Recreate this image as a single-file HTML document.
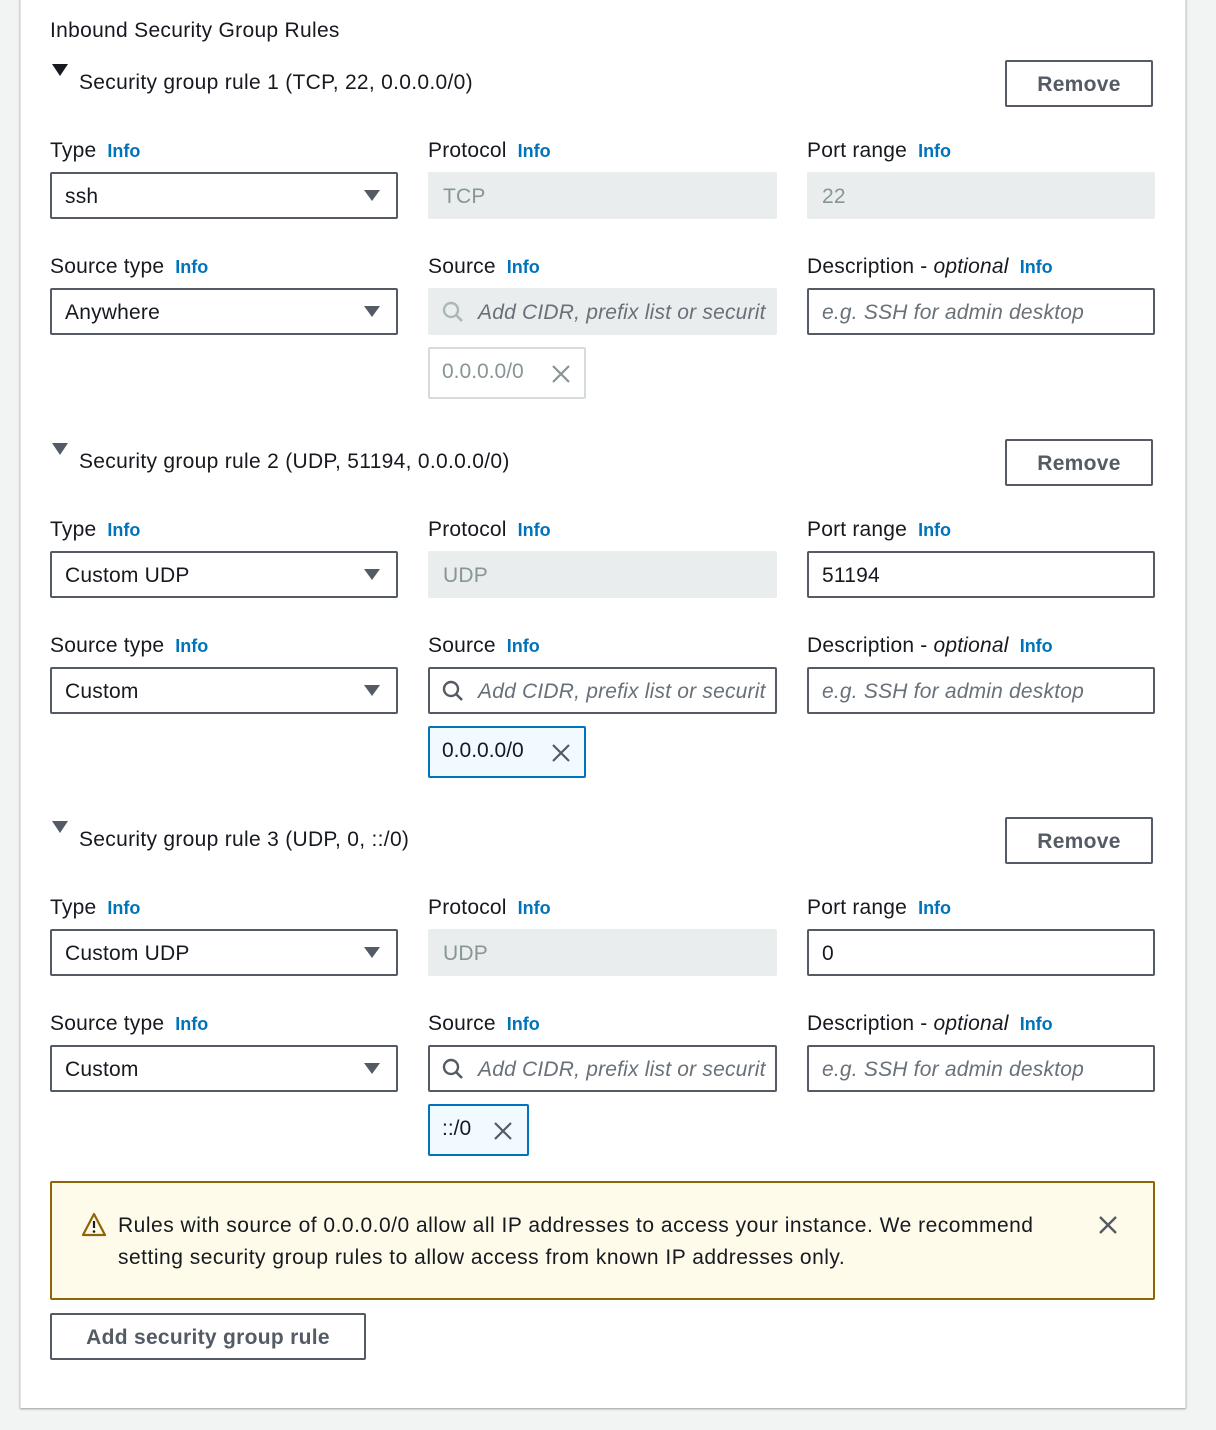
<!DOCTYPE html>
<html><head><meta charset="utf-8"><style>
*{box-sizing:border-box;margin:0;padding:0}
body{width:1216px;height:1430px;background:#f2f3f3;font-family:"Liberation Sans",sans-serif;color:#16191f;position:relative;overflow:hidden}
.panel{position:absolute;left:20px;top:-4px;width:1166px;height:1412px;background:#fff;border-left:1px solid #e0e2e3;border-right:1px solid #d5dbdb;box-shadow:0 1px 2px rgba(0,28,36,.4)}
.a{position:absolute}
.t{font-size:21px;white-space:nowrap;letter-spacing:0.3px;margin-top:2px}
.lbl{font-size:21px;white-space:nowrap;letter-spacing:0.2px;margin-top:1px}
.info{color:#0073bb;font-weight:bold;font-size:18px;margin-left:11px;letter-spacing:0}
.box{position:absolute;height:47px;border:2px solid #545b64;border-radius:2px;font-size:21px;letter-spacing:0.2px;line-height:45px;padding-left:13px;white-space:nowrap;overflow:hidden;background:#fff}
.dis{background:#eaeded;border-color:#eaeded;color:#879596}
.ph{color:#687078;font-style:italic}
.btn{position:absolute;border:2px solid #545b64;border-radius:2px;font-weight:bold;color:#545b64;font-size:21px;letter-spacing:0.3px;text-align:center;line-height:45px;height:47px;background:#fff}
.arrow{position:absolute;right:16px;top:16px;width:0;height:0;border-left:8px solid transparent;border-right:8px solid transparent;border-top:11px solid #545b64}
.tok{position:absolute;height:52px;border:2px solid #0073bb;background:#f1faff;border-radius:2px;font-size:21px;line-height:46px;padding-left:12px;white-space:nowrap}
.tokd{border-color:#d5dbdb;background:#fff;color:#879596}
.tri{position:absolute;width:0;height:0;border-left:8px solid transparent;border-right:8px solid transparent;border-top:12px solid #16191f}
</style></head><body>
<div class="panel"></div>
<div class="a t" style="left:50px;top:17px;font-size:21px">Inbound Security Group Rules</div>

<!-- rule 1 -->
<div class="tri" style="left:52px;top:64px"></div>
<div class="a t" style="left:79px;top:69px">Security group rule 1 (TCP, 22, 0.0.0.0/0)</div>
<div class="btn" style="left:1005px;top:60px;width:148px">Remove</div>
<div class="a lbl" style="left:50px;top:138px">Type<span class="info">Info</span></div>
<div class="a lbl" style="left:428px;top:138px">Protocol<span class="info">Info</span></div>
<div class="a lbl" style="left:807px;top:138px">Port range<span class="info">Info</span></div>
<div class="box" style="left:50px;top:172px;width:348px">ssh<div class="arrow"></div></div>
<div class="box dis" style="left:428px;top:172px;width:349px">TCP</div>
<div class="box dis" style="left:807px;top:172px;width:348px">22</div>
<div class="a lbl" style="left:50px;top:254px">Source type<span class="info">Info</span></div>
<div class="a lbl" style="left:428px;top:254px">Source<span class="info">Info</span></div>
<div class="a lbl" style="left:807px;top:254px">Description - <i>optional</i><span class="info">Info</span></div>
<div class="box" style="left:50px;top:288px;width:348px">Anywhere<div class="arrow"></div></div>
<div class="box dis" style="left:428px;top:288px;width:349px;padding-left:48px"><svg class="a" style="left:12px;top:11px" width="22" height="22" viewBox="0 0 22 22"><circle cx="9" cy="9" r="7" fill="none" stroke="#aab7b8" stroke-width="2.4"/><path d="M14 14l6 6" stroke="#aab7b8" stroke-width="2.6"/></svg><span class="ph" style="color:#687078">Add CIDR, prefix list or securit</span></div>
<div class="box" style="left:807px;top:288px;width:348px"><span class="ph">e.g. SSH for admin desktop</span></div>
<div class="tok tokd" style="left:428px;top:347px;width:158px">0.0.0.0/0<svg class="a" style="left:121px;top:15px" width="20" height="20"><path d="M2 2L18 18M18 2L2 18" stroke="#879596" stroke-width="2.2"/></svg></div>

<!-- rule 2 -->
<div class="tri" style="left:52px;top:443px;border-top-color:#545b64"></div>
<div class="a t" style="left:79px;top:448px">Security group rule 2 (UDP, 51194, 0.0.0.0/0)</div>
<div class="btn" style="left:1005px;top:439px;width:148px">Remove</div>
<div class="a lbl" style="left:50px;top:517px">Type<span class="info">Info</span></div>
<div class="a lbl" style="left:428px;top:517px">Protocol<span class="info">Info</span></div>
<div class="a lbl" style="left:807px;top:517px">Port range<span class="info">Info</span></div>
<div class="box" style="left:50px;top:551px;width:348px">Custom UDP<div class="arrow"></div></div>
<div class="box dis" style="left:428px;top:551px;width:349px">UDP</div>
<div class="box" style="left:807px;top:551px;width:348px">51194</div>
<div class="a lbl" style="left:50px;top:633px">Source type<span class="info">Info</span></div>
<div class="a lbl" style="left:428px;top:633px">Source<span class="info">Info</span></div>
<div class="a lbl" style="left:807px;top:633px">Description - <i>optional</i><span class="info">Info</span></div>
<div class="box" style="left:50px;top:667px;width:348px">Custom<div class="arrow"></div></div>
<div class="box" style="left:428px;top:667px;width:349px;padding-left:48px"><svg class="a" style="left:12px;top:11px" width="22" height="22" viewBox="0 0 22 22"><circle cx="9" cy="9" r="7" fill="none" stroke="#545b64" stroke-width="2.4"/><path d="M14 14l6 6" stroke="#545b64" stroke-width="2.6"/></svg><span class="ph">Add CIDR, prefix list or securit</span></div>
<div class="box" style="left:807px;top:667px;width:348px"><span class="ph">e.g. SSH for admin desktop</span></div>
<div class="tok" style="left:428px;top:726px;width:158px">0.0.0.0/0<svg class="a" style="left:121px;top:15px" width="20" height="20"><path d="M2 2L18 18M18 2L2 18" stroke="#545b64" stroke-width="2.2"/></svg></div>

<!-- rule 3 -->
<div class="tri" style="left:52px;top:821px;border-top-color:#545b64"></div>
<div class="a t" style="left:79px;top:826px">Security group rule 3 (UDP, 0, ::/0)</div>
<div class="btn" style="left:1005px;top:817px;width:148px">Remove</div>
<div class="a lbl" style="left:50px;top:895px">Type<span class="info">Info</span></div>
<div class="a lbl" style="left:428px;top:895px">Protocol<span class="info">Info</span></div>
<div class="a lbl" style="left:807px;top:895px">Port range<span class="info">Info</span></div>
<div class="box" style="left:50px;top:929px;width:348px">Custom UDP<div class="arrow"></div></div>
<div class="box dis" style="left:428px;top:929px;width:349px">UDP</div>
<div class="box" style="left:807px;top:929px;width:348px">0</div>
<div class="a lbl" style="left:50px;top:1011px">Source type<span class="info">Info</span></div>
<div class="a lbl" style="left:428px;top:1011px">Source<span class="info">Info</span></div>
<div class="a lbl" style="left:807px;top:1011px">Description - <i>optional</i><span class="info">Info</span></div>
<div class="box" style="left:50px;top:1045px;width:348px">Custom<div class="arrow"></div></div>
<div class="box" style="left:428px;top:1045px;width:349px;padding-left:48px"><svg class="a" style="left:12px;top:11px" width="22" height="22" viewBox="0 0 22 22"><circle cx="9" cy="9" r="7" fill="none" stroke="#545b64" stroke-width="2.4"/><path d="M14 14l6 6" stroke="#545b64" stroke-width="2.6"/></svg><span class="ph">Add CIDR, prefix list or securit</span></div>
<div class="box" style="left:807px;top:1045px;width:348px"><span class="ph">e.g. SSH for admin desktop</span></div>
<div class="tok" style="left:428px;top:1104px;width:101px">::/0<svg class="a" style="left:63px;top:15px" width="20" height="20"><path d="M2 2L18 18M18 2L2 18" stroke="#545b64" stroke-width="2.2"/></svg></div>

<!-- alert -->
<div class="a" style="left:50px;top:1181px;width:1105px;height:119px;background:#fffbeb;border:2px solid #8d6605;border-radius:2px"></div>
<svg class="a" style="left:81px;top:1212px" width="26" height="25" viewBox="0 0 26 25"><path d="M13 2L24 23H2Z" fill="none" stroke="#8d6605" stroke-width="2.2" stroke-linejoin="round"/><path d="M13 9v7" stroke="#16191f" stroke-width="2.2"/><circle cx="13" cy="19.5" r="1.3" fill="#16191f"/></svg>
<div class="a t" style="left:118px;top:1208px;line-height:32px;letter-spacing:0.5px">Rules with source of 0.0.0.0/0 allow all IP addresses to access your instance. We recommend<br>setting security group rules to allow access from known IP addresses only.</div>
<svg class="a" style="left:1098px;top:1215px" width="20" height="20"><path d="M2 2L18 18M18 2L2 18" stroke="#545b64" stroke-width="2.4"/></svg>

<div class="btn" style="left:50px;top:1313px;width:316px">Add security group rule</div>
</body></html>
